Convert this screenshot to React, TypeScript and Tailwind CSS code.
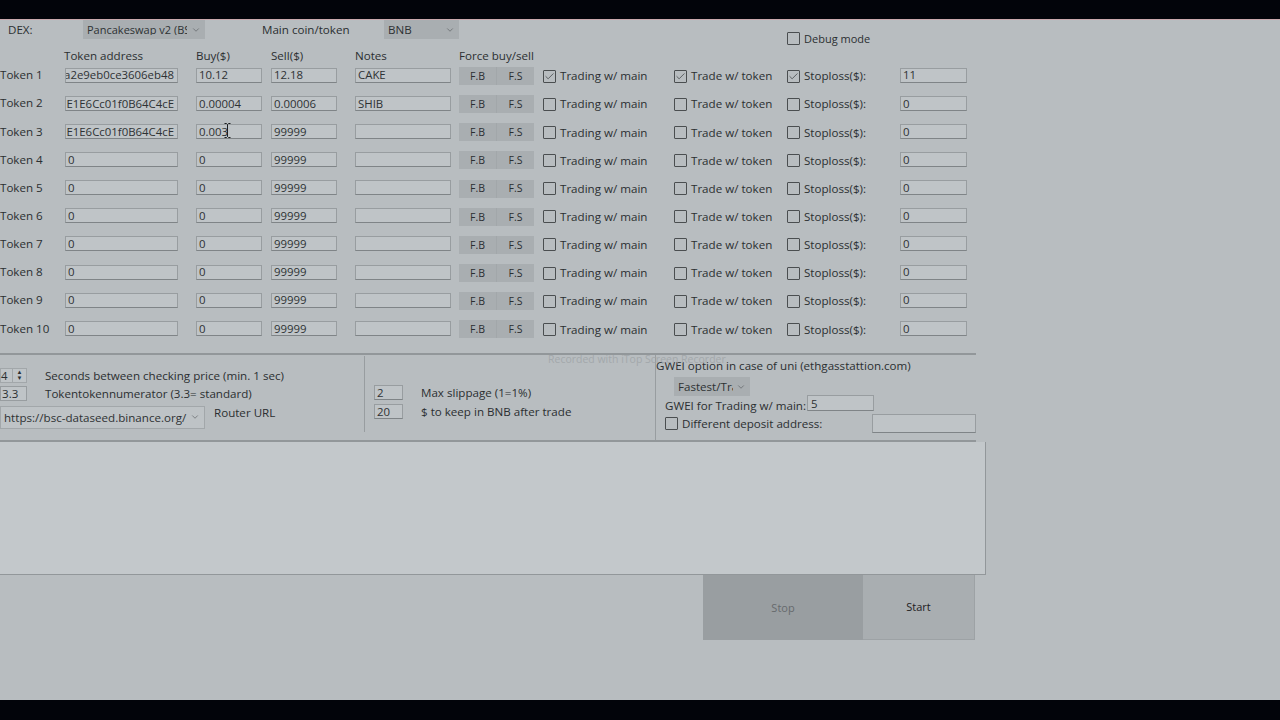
import { ChevronDown, Check } from "lucide-react";

const rows = [
  { name: "Token 1", addr: "a2e9eb0ce3606eb48", buy: "10.12", sell: "12.18", notes: "CAKE", on: true, stop: "11" },
  { name: "Token 2", addr: "E1E6Cc01f0B64C4cE", buy: "0.00004", sell: "0.00006", notes: "SHIB", on: false, stop: "0" },
  { name: "Token 3", addr: "E1E6Cc01f0B64C4cE", buy: "0.003", sell: "99999", notes: "", on: false, stop: "0" },
  { name: "Token 4", addr: "0", buy: "0", sell: "99999", notes: "", on: false, stop: "0" },
  { name: "Token 5", addr: "0", buy: "0", sell: "99999", notes: "", on: false, stop: "0" },
  { name: "Token 6", addr: "0", buy: "0", sell: "99999", notes: "", on: false, stop: "0" },
  { name: "Token 7", addr: "0", buy: "0", sell: "99999", notes: "", on: false, stop: "0" },
  { name: "Token 8", addr: "0", buy: "0", sell: "99999", notes: "", on: false, stop: "0" },
  { name: "Token 9", addr: "0", buy: "0", sell: "99999", notes: "", on: false, stop: "0" },
  { name: "Token 10", addr: "0", buy: "0", sell: "99999", notes: "", on: false, stop: "0" },
];

const Box = ({ children, className = "" }: { children?: React.ReactNode; className?: string }) => (
  <div className={`flex items-center overflow-hidden whitespace-nowrap border border-[#989da0] border-b-[#7f8487] bg-[#bfc4c7] px-[2px] text-[11.4px] leading-none text-[#2e3234] ${className}`}>
    {children}
  </div>
);

const Tick = ({ on = false }: { on?: boolean }) => (
  <div className="flex h-[13px] w-[13px] shrink-0 items-center justify-center rounded-[1px] border border-[#4a4e50]">
    {on && <Check size={11} strokeWidth={1.5} className="text-[#33373a]" />}
  </div>
);

const Pick = ({ children, className = "" }: { children: React.ReactNode; className?: string }) => (
  <div className={`flex items-center justify-between overflow-hidden whitespace-nowrap bg-[#a9aeb1] text-[#2e3234] ${className}`}>
    {children}
    <ChevronDown size={10} strokeWidth={1.5} className="mr-[4px] shrink-0 text-[#55595c]" />
  </div>
);

const Row = ({ r }: { r: (typeof rows)[number] }) => (
  <div className="grid h-[28.15px] grid-cols-[65px_113px_18px_66px_9px_66px_18px_96px_8px_75px_9px_131px_113px_113px_67px] items-center">
    <div>{r.name}</div>
    {r.addr === "0" ? (
      <Box className="h-[15px]">{r.addr}</Box>
    ) : (
      <Box className="h-[15px] justify-end !pr-[3px]">{r.addr}</Box>
    )}
    <div />
    <div className="relative">
      <Box className="h-[15px]">{r.buy}</Box>
      {r.name === "Token 3" && (
        <svg width="7" height="15" viewBox="0 0 7 15" className="absolute -top-[1px] left-[28px]" fill="none" stroke="#1c1f21" strokeWidth="1">
          <path d="M0.5 0.5h2l1 1 1-1h2M3.5 1.5v12M0.5 14.5h2l1-1 1 1h2" />
        </svg>
      )}
    </div>
    <div />
    <Box className="h-[15px]">{r.sell}</Box>
    <div />
    <Box className="h-[15px]">{r.notes}</Box>
    <div />
    <div className="mt-[2px] flex h-[18px] text-[10.5px]">
      <div className="flex w-[38px] items-center justify-center border-r border-[#a2a7aa] bg-[#a9aeb1]">F.B</div>
      <div className="flex w-[37px] items-center justify-center bg-[#a9aeb1]">F.S</div>
    </div>
    <div />
    <div className="mt-[2px] flex items-center gap-[4px]">
      <Tick on={r.on} />
      <span>Trading w/ main</span>
    </div>
    <div className="mt-[2px] flex items-center gap-[4px]">
      <Tick on={r.on} />
      <span>Trade w/ token</span>
    </div>
    <div className="mt-[2px] flex items-center gap-[4px]">
      <Tick on={r.on} />
      <span>Stoploss($):</span>
    </div>
    <Box className="h-[15px]">{r.stop}</Box>
  </div>
);

export default function App() {
  return (
    <div className="relative flex h-[720px] w-[1280px] flex-col overflow-hidden bg-[#b8bdc0] font-['Open_Sans','Noto_Sans',sans-serif] text-[11.6px] leading-none text-[#2b2f31]">
      <div className="h-[20px] shrink-0 border-b border-[#c9a9ad] bg-[#02040a]" />

      <div className="flex h-[30px] shrink-0 items-start">
        <div className="ml-[8px] flex h-[19px] w-[75px] items-center">DEX:</div>
        <Pick className="h-[19px] w-[122px] pl-[4px] text-[11px]">
          <span className="w-[100px] overflow-hidden">Pancakeswap v2 (BSC)</span>
        </Pick>
        <div className="ml-[57px] flex h-[19px] w-[122px] items-center">Main coin/token</div>
        <Pick className="h-[19px] w-[75px] pl-[4px]">BNB</Pick>
        <div className="mt-[12px] ml-[328px] flex items-center gap-[4px] text-[11px]">
          <Tick />
          <span>Debug mode</span>
        </div>
      </div>

      <div className="flex h-[11px] shrink-0 items-start">
        <div className="ml-[64px] w-[132px]">Token address</div>
        <div className="w-[75px]">Buy($)</div>
        <div className="w-[84px]">Sell($)</div>
        <div className="w-[104px]">Notes</div>
        <div>Force buy/sell</div>
      </div>

      <div className="shrink-0">
        {rows.map((r) => (
          <Row key={r.name} r={r} />
        ))}
      </div>

      {/* settings strip */}
      <div className="mt-[11px] flex h-[88.5px] w-[976px] shrink-0 border-y-2 border-[#92979a]">
        <div className="flex w-[364px] shrink-0 flex-col pt-[10.5px]">
          <div className="flex h-[19px] items-center">
            <div className="flex h-[15px] w-[27px] items-center justify-between border border-[#a2a7aa] bg-[#bfc4c7] text-[11.4px]">
              <span>4</span>
              <div className="flex h-full w-[14px] flex-col items-center justify-center border-l border-[#a2a7aa] text-[6px] leading-[6px]">
                <span>▲</span>
                <span>▼</span>
              </div>
            </div>
            <span className="ml-[18px]">Seconds between checking price (min. 1 sec)</span>
          </div>
          <div className="flex h-[18px] items-center">
            <div className="flex h-[15px] w-[27px] items-center border border-[#989da0] bg-[#bfc4c7] pl-[1px]">3.3</div>
            <span className="ml-[18px]">Tokentokennumerator (3.3= standard)</span>
          </div>
          <div className="mt-[3px] flex items-start">
            <Pick className="h-[23px] w-[205px] border border-[#a2a7aa] bg-[#bec3c6] pl-[3px]">https://bsc-dataseed.binance.org/</Pick>
            <span className="mt-[1px] ml-[9px]">Router URL</span>
          </div>
        </div>

        <div className="mt-[1px] h-[76px] w-[1px] shrink-0 bg-[#989da0]" />

        <div className="flex w-[290px] shrink-0 flex-col gap-[4px] pt-[30px] pl-[9px]">
          <div className="flex items-center">
            <Box className="h-[15px] w-[29px]">2</Box>
            <span className="ml-[18px]">Max slippage (1=1%)</span>
          </div>
          <div className="flex items-center">
            <Box className="h-[15px] w-[29px]">20</Box>
            <span className="ml-[18px]">$ to keep in BNB after trade</span>
          </div>
        </div>

        <div className="h-full w-[1px] shrink-0 bg-[#989da0]" />

        <div className="flex min-w-0 flex-1 flex-col pt-[5px]">
          <div className="h-[17px] whitespace-nowrap">GWEI option in case of uni (ethgasstattion.com)</div>
          <Pick className="ml-[18px] h-[19px] w-[76px] pl-[4px]">
            <span className="w-[55px] overflow-hidden">Fastest/Trader</span>
          </Pick>
          <div className="-mt-[1px] ml-[9px] flex items-center">
            <span className="mt-[4px]">GWEI for Trading w/ main:</span>
            <Box className="ml-[1px] h-[16px] w-[67px] !pl-[3px]">5</Box>
          </div>
          <div className="mt-[3px] ml-[9px] flex items-center">
            <Tick />
            <span className="ml-[4px] w-[190px]">Different deposit address:</span>
            <Box className="h-[19px] w-[104px]" />
          </div>
        </div>
      </div>

      <div className="h-[133px] w-[986px] shrink-0 border-r border-b border-[#92979a] bg-[#c3c8cb]" />

      <div className="ml-[703px] flex h-[65px] w-[272px] shrink-0 text-[11px]">
        <div className="flex w-[160px] items-center justify-center bg-[#999ea1] text-[#666a6d]">Stop</div>
        <div className="flex w-[112px] items-center justify-center border-r border-b border-[#9da2a5] bg-[#a9aeb1] text-[#1d2022]">Start</div>
      </div>

      <div className="mt-auto h-[20px] shrink-0 bg-[#02040a]" />

      <div className="absolute top-[354px] left-[548px] text-[10.5px] whitespace-nowrap text-[#a3a8ab]">Recorded with iTop Screen Recorder</div>
    </div>
  );
}
